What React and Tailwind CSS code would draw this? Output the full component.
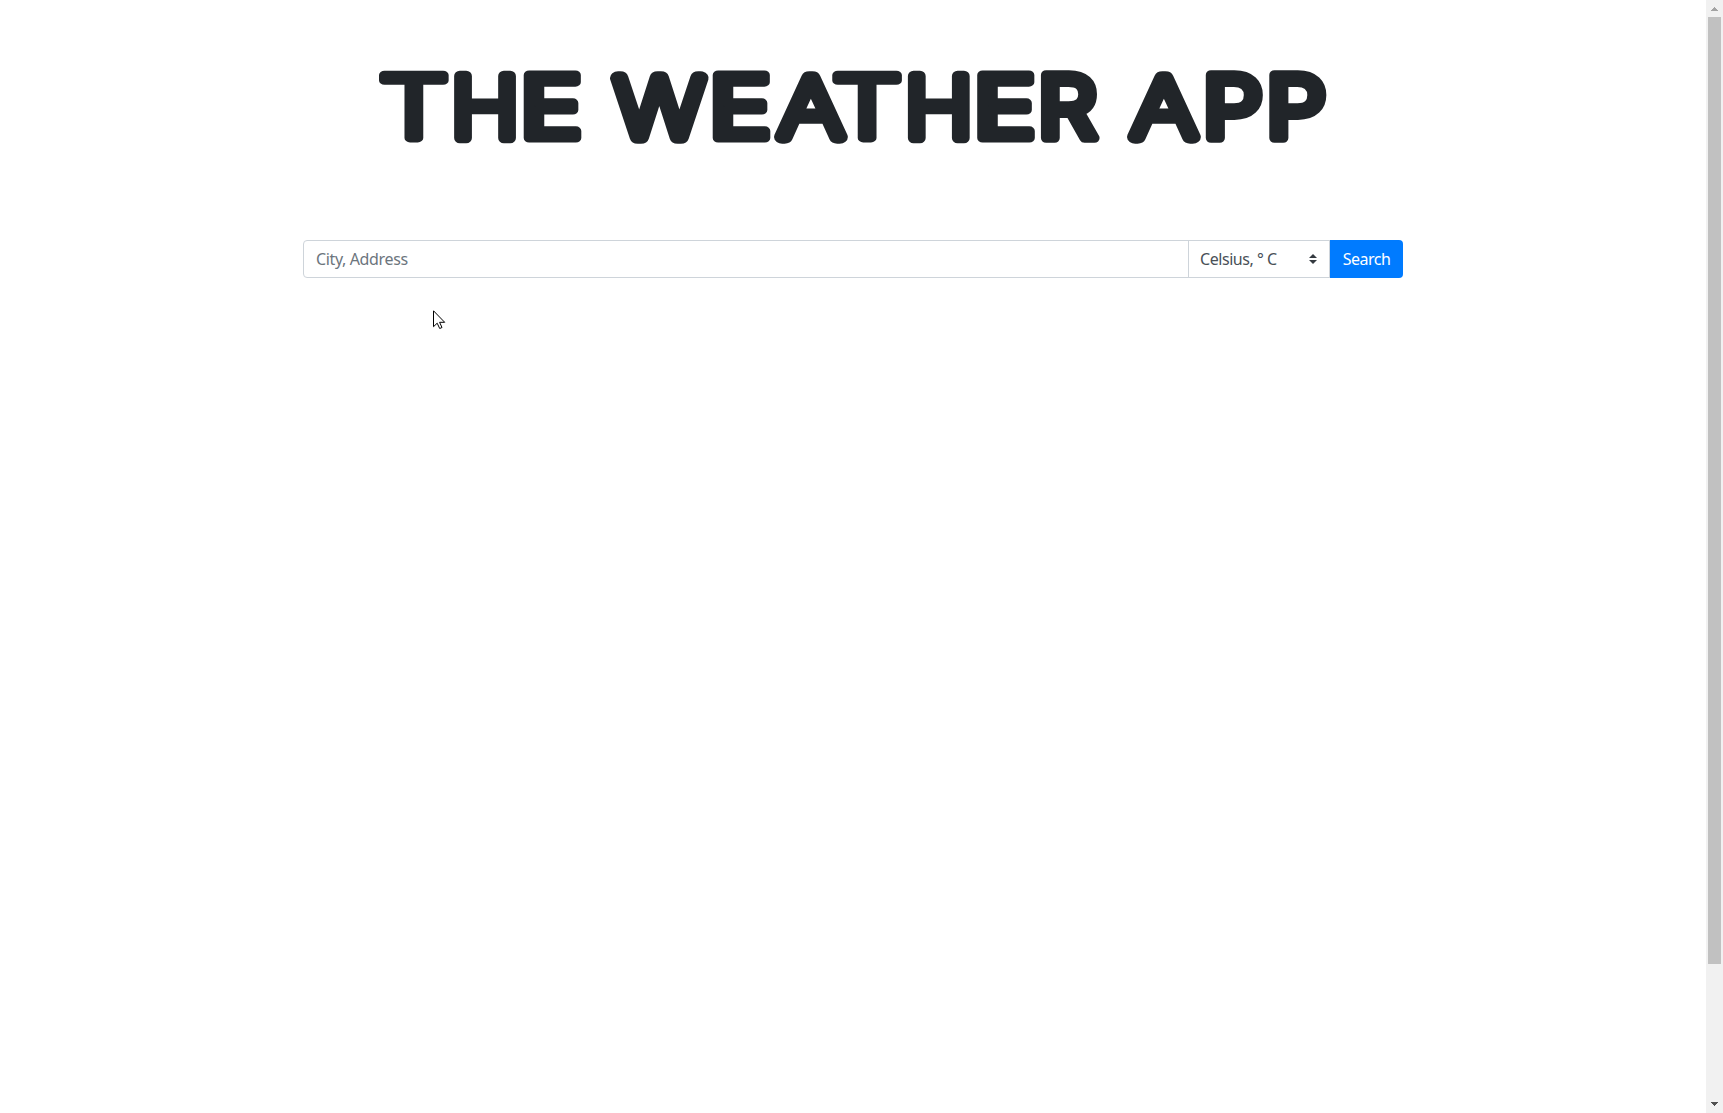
// Upright letters carry a heavier outline face; diagonal letters use a hairline
// face with a wider stroke so that their apexes come out fully round.
const UPRIGHT = { size: 86.9, baseline: 138.4, stroke: 10 };
const CROSSBAR = { size: 85.6, baseline: 138, stroke: 11 };
const DIAGONAL = { size: 80.5, baseline: 136.7, stroke: 15 };

// One entry per letter: [character, x, horizontal stretch, font weight, style]
const WORDS = [
  [
    ["T", 378.7, 1.27, 300, UPRIGHT],
    ["H", 451.0, 1.075, 320, CROSSBAR],
    ["E", 519.9, 1.2, 380, UPRIGHT],
  ],
  [
    ["W", 615.1, 1.185, 100, DIAGONAL],
    ["E", 708.9, 1.2, 380, UPRIGHT],
    ["A", 778.9, 1.24, 100, DIAGONAL],
    ["T", 832.0, 1.27, 300, UPRIGHT],
    ["H", 904.7, 1.075, 320, CROSSBAR],
    ["E", 973.6, 1.2, 380, UPRIGHT],
    ["R", 1037.9, 1.06, 380, UPRIGHT],
  ],
  [
    ["A", 1132.1, 1.24, 100, DIAGONAL],
    ["P", 1202.8, 1.08, 380, UPRIGHT],
    ["P", 1266.3, 1.08, 380, UPRIGHT],
  ],
];

function Title() {
  return (
    <h1 aria-label="THE WEATHER APP" className="mt-[60px] h-[100px] w-[960px]">
      <svg
        width="960"
        height="100"
        viewBox="373 60 960 100"
        className="block overflow-visible font-['Inter']"
        fill="#212529"
        stroke="#212529"
        strokeLinejoin="round"
      >
        {WORDS.map((word, w) => (
          <g key={w}>
            {word.map(([char, x, stretch, weight, style], i) => (
              <text
                key={i}
                transform={`translate(${x} ${style.baseline}) scale(${stretch} 1)`}
                vectorEffect="non-scaling-stroke"
                fontSize={style.size}
                fontWeight={weight}
                strokeWidth={style.stroke}
              >
                {char}
              </text>
            ))}{" "}
          </g>
        ))}
      </svg>
    </h1>
  );
}

function SearchBar() {
  return (
    <form className="mt-[80px] flex h-[38px] w-[1100px] text-[16px]" onSubmit={(e) => e.preventDefault()}>
      <input
        type="text"
        placeholder="City, Address"
        className="h-full min-w-0 flex-1 rounded-l border border-[#ced4da] bg-white px-3 tracking-[-0.37px] text-[#495057] outline-none placeholder:text-[#6c757d]"
      />
      <button type="button" className="-ml-px flex h-full w-[142px] items-center justify-between border border-[#ced4da] bg-white pr-3 pl-[11px] text-[#495057]">
        <span className="tracking-[-0.45px]">Celsius, ° C</span>
        <svg width="8" height="10" viewBox="0 0 4 5" fill="#343a40">
          <path d="M2 0 0 2h4zm0 5L0 3h4z" />
        </svg>
      </button>
      <button type="submit" className="h-full w-[73px] rounded-r bg-[#007bff] text-center tracking-[-0.5px] text-white">
        Search
      </button>
    </form>
  );
}

function Scrollbar() {
  return (
    <div className="flex h-full w-[17px] shrink-0 flex-col items-center bg-[#f1f1f1]">
      <div className="h-[17px] pt-[7px]">
        <svg className="block" width="7" height="4" viewBox="0 0 7 4" fill="#a3a3a3" shapeRendering="crispEdges">
          <path d="M3 0h1v1h1v1h1v1h1v1H0V3h1V2h1V1h1z" />
        </svg>
      </div>
      <div className="h-[947px] w-[13px] bg-[#c1c1c1]" />
      <div className="mt-auto h-[17px] pt-[6px]">
        <svg className="block" width="7" height="4" viewBox="0 0 7 4" fill="#505050" shapeRendering="crispEdges">
          <path d="M0 0h7v1H6v1H5v1H4v1H3V3H2V2H1V1H0z" />
        </svg>
      </div>
    </div>
  );
}

function Pointer() {
  return (
    <svg className="absolute top-[310px] left-[433px]" width="13" height="19" viewBox="0 0 13 19">
      <path d="M.5.8v15.9l3.7-3.5 2.5 5.3 2.3-1-2.4-5.2h5.1z" fill="#fff" stroke="#000" strokeWidth="1" />
    </svg>
  );
}

export default function App() {
  return (
    <div className="relative flex h-[1113px] w-[1723px] overflow-hidden bg-white font-['Noto_Sans',sans-serif]">
      <main className="flex flex-1 flex-col items-center">
        <Title />
        <SearchBar />
      </main>
      <Scrollbar />
      <Pointer />
    </div>
  );
}
